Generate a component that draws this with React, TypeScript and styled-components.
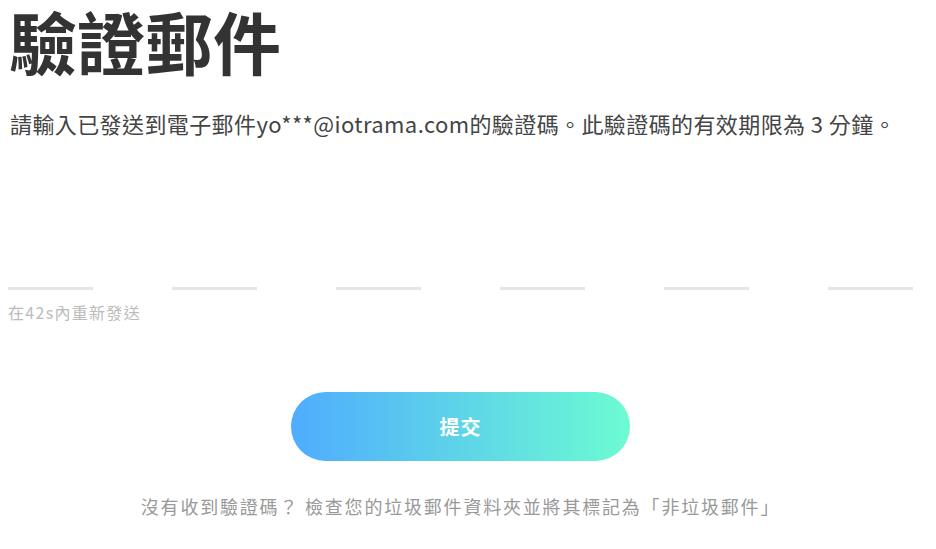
import styled, { createGlobalStyle } from 'styled-components';

const GlobalStyle = createGlobalStyle`
  html, body {
    margin: 0;
    padding: 0;
    background: #fff;
  }
  body {
    font-family: "Noto Sans CJK TC", "Noto Sans", sans-serif;
  }
`;

const Root = styled.div`
  width: 905px;
  margin-left: 8px;
  display: flex;
  flex-direction: column;
`;

const Title = styled.h1`
  margin: 8px 0 0 1px;
  font-family: "Liberation Sans", "Noto Sans CJK TC", sans-serif;
  font-size: 68px;
  line-height: 76px;
  font-weight: 700;
  color: #333;
`;

const Hint = styled.p`
  margin: 24px 0 0 2px;
  font-size: 22px;
  line-height: 30px;
  letter-spacing: 0.4px;
  color: #444;
  white-space: nowrap;
`;

const CodeRow = styled.div`
  display: flex;
  gap: 79px;
  margin-top: 119px;
`;

const CodeInput = styled.input`
  width: 85px;
  height: 30px;
  padding: 0;
  border: none;
  border-bottom: 3px solid #e6e6e6;
  outline: none;
  text-align: center;
  font-size: 22px;
  font-family: inherit;
  color: #333;
  background: transparent;
`;

const Resend = styled.div`
  margin-top: 11px;
  font-size: 16px;
  line-height: 22px;
  letter-spacing: 1.3px;
  color: #bbb;
`;

const SubmitButton = styled.button`
  align-self: center;
  margin-top: 69px;
  width: 339px;
  height: 69px;
  border: none;
  border-radius: 35px;
  background: linear-gradient(90deg, #4facfe 0%, #6cfcd2 100%);
  color: #fff;
  font-family: inherit;
  font-size: 20px;
  font-weight: 700;
  letter-spacing: 1px;
  cursor: pointer;
`;

const Footer = styled.p`
  margin: 32px 0 0;
  text-align: center;
  font-size: 18px;
  line-height: 26px;
  letter-spacing: 1.8px;
  color: #999;
`;

const App = () => {
  return (
    <>
      <GlobalStyle />
      <Root>
        <Title>驗證郵件</Title>
        <Hint>請輸入已發送到電子郵件yo***@iotrama.com的驗證碼。此驗證碼的有效期限為 3 分鐘。</Hint>
        <CodeRow>
          {[0, 1, 2, 3, 4, 5].map((i) => (
            <CodeInput key={i} maxLength={1} />
          ))}
        </CodeRow>
        <Resend>在42s內重新發送</Resend>
        <SubmitButton>提交</SubmitButton>
        <Footer>沒有收到驗證碼？ 檢查您的垃圾郵件資料夾並將其標記為「非垃圾郵件」</Footer>
      </Root>
    </>
  );
};

export default App;
